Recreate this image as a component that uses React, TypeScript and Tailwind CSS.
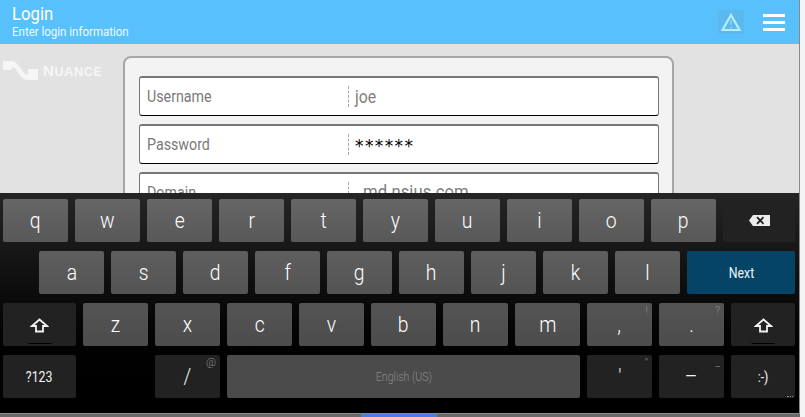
const font = { fontFamily: '"Roboto", "Noto Sans", sans-serif' }

type KeyDef = {
  label?: string
  hint?: string
  w?: string
  kind?: 'light' | 'dark' | 'next' | 'space' | 'gap'
  icon?: 'shift' | 'back'
  small?: boolean
}

const row1: KeyDef[] = [
  ...['q', 'w', 'e', 'r', 't', 'y', 'u', 'i', 'o', 'p'].map(label => ({ label })),
  { icon: 'back', kind: 'dark', w: 'w-[72px]' }
]
const row2: KeyDef[] = [
  ...['a', 's', 'd', 'f', 'g', 'h', 'j', 'k', 'l'].map(label => ({ label })),
  { label: 'Next', kind: 'next', w: 'w-[108px]', small: true }
]
const row3: KeyDef[] = [
  { icon: 'shift', kind: 'dark', w: 'w-[73px]' },
  ...['z', 'x', 'c', 'v', 'b', 'n', 'm'].map(label => ({ label })),
  { label: ',', hint: '!' },
  { label: '.', hint: '?' },
  { icon: 'shift', kind: 'dark', w: 'w-[64px]' }
]
const row4: KeyDef[] = [
  { label: '?123', kind: 'dark', w: 'w-[73px]', small: true },
  { kind: 'gap', w: 'w-[65px]' },
  { label: '/', hint: '@', kind: 'dark' },
  { label: 'English (US)', kind: 'space', w: 'w-[353px]' },
  { label: "'", hint: '"', kind: 'dark' },
  { label: '–', hint: '_', kind: 'dark' },
  { label: ':-)', kind: 'dark', w: 'w-[64px]', small: true }
]

function ShiftIcon() {
  return (
    <>
      <svg width="19" height="15" viewBox="0 0 19 15" className="mt-[1px]">
        <path d="M9.5 1.5 L17 8 H13 V13.5 H6 V8 H2 Z" fill="none" stroke="#f2f2f2" strokeWidth="1.8" />
      </svg>
      <div className="absolute bottom-[2px] left-1/2 h-[1px] w-[23px] -translate-x-1/2 bg-black" />
    </>
  )
}

function BackIcon() {
  return (
    <svg width="21" height="11" viewBox="0 0 21 11">
      <path d="M4 0 H21 V11 H4 L0 5.5 Z" fill="#ececec" />
      <path d="M8 2.2 L14.5 8.8 M14.5 2.2 L8 8.8" stroke="#222" strokeWidth="1.8" />
    </svg>
  )
}

function Key({ def, light }: { def: KeyDef; light: string }) {
  const kind = def.kind ?? 'light'
  if (kind === 'gap') return <div className={def.w} />

  const skin =
    kind === 'next'
      ? 'bg-[#054467] text-[#eef4f8]'
      : kind === 'dark'
        ? 'bg-[#222222] text-[#f4f4f4]'
        : kind === 'space'
          ? 'bg-[#4b4b4b] text-[#8a8a8a]'
          : `${light} text-white`

  const text =
    kind === 'space'
      ? 'text-[12px] font-light'
      : def.small
        ? 'text-[14px] font-normal'
        : 'text-[22px] font-light'

  return (
    <div className={`relative flex h-[43px] shrink-0 items-center justify-center rounded-[2px] ${def.w ?? 'w-[65px]'} ${skin} ${text}`}>
      {def.icon === 'shift' && <ShiftIcon />}
      {def.icon === 'back' && <BackIcon />}
      {def.label && <span className="inline-block scale-x-[0.88] leading-none">{def.label}</span>}
      {def.hint && (
        <span className="absolute top-[1px] right-[4px] text-[11px] leading-[14px] text-[#8c8c8c]">{def.hint}</span>
      )}
      {def.label === ':-)' && (
        <span className="absolute right-[2px] bottom-[1px] h-[1px] w-[6px] border-t border-dotted border-[#8c8c8c]" />
      )}
    </div>
  )
}

function KeyRow({ keys, light, className = '' }: { keys: KeyDef[]; light: string; className?: string }) {
  return (
    <div className={`flex gap-[7px] ${className}`}>
      {keys.map((k, i) => (
        <Key key={i} def={k} light={light} />
      ))}
    </div>
  )
}

function Field({ label, value, mono, indent }: { label: string; value: string; mono?: boolean; indent?: boolean }) {
  return (
    <div className="flex h-10 items-center rounded-[3px] border border-t-2 border-[#777] border-b-black bg-white pl-[7px]">
      <div className="w-[201px] text-[16px] text-[#7a7a7a]">
        <span className="inline-block origin-left scale-x-[0.89]">{label}</span>
      </div>
      <div className="h-[21px] border-l border-dashed border-[#aaa]" />
      {mono ? (
        <div className="pt-[5px] pl-[6px] text-[17px] tracking-[1.4px] text-black" style={{ fontFamily: '"DejaVu Sans", sans-serif' }}>
          {value}
        </div>
      ) : (
        <div className={`${indent ? 'pl-[14px] text-[19px]' : 'pl-[6px] text-[18px]'} text-[#808080]`}>
          <span className="inline-block origin-left scale-x-[0.88]">{value}</span>
        </div>
      )}
    </div>
  )
}

export default function App() {
  return (
    <div className="relative h-[417px] w-[805px] overflow-hidden bg-[#f4f4f4]" style={font}>
      <div className="h-[413px] w-[800px] border-r border-[#8a8a8a] bg-[#e2e2e2]">
        {/* top bar */}
        <div className="flex h-11 items-center justify-between bg-[#58c1fc] pr-[14px] pl-3 text-white">
          <div>
            <div className="origin-left scale-x-[0.88] text-[19px] leading-[18px]">Login</div>
            <div className="mt-[2px] origin-left scale-x-[0.92] text-[12.5px] leading-[14px] text-[#eefaff]">Enter login information</div>
          </div>
          <div className="flex items-center gap-[19px]">
            <div className="flex h-6 w-[26px] items-center justify-center bg-[#5cb9ee]">
              <svg width="22" height="20" viewBox="0 0 22 20">
                <path d="M11 3 L19.5 18 H2.5 Z" fill="none" stroke="#b5eeff" strokeWidth="2.2" />
                <path d="M11 8 V13 M11 14.5 V16.5" stroke="#8fc9e6" strokeWidth="2" />
              </svg>
            </div>
            <div className="flex w-[22px] flex-col gap-[4px]">
              <div className="h-[3px] bg-white" />
              <div className="h-[3px] bg-white" />
              <div className="h-[3px] bg-white" />
            </div>
          </div>
        </div>

        <div className="flex pt-3">
          {/* logo */}
          <div className="flex h-[26px] w-[123px] shrink-0 items-start pt-[4px] pl-[3px]">
            <svg width="38" height="21" viewBox="0 0 38 21" className="shrink-0">
              <path d="M0 1 H8 C12 1 14 3 16 6 L19 10 C21 13 23 15 25 15 V9 H35 V20 H25 C21 20 18 17 16 14 L12 8 C11 7 10 7 9 7 V10 H0 Z" fill="#f6f6f6" />
            </svg>
            <span className="ml-[2px] pt-[4px] text-[12.5px] leading-[14px] font-bold tracking-[0.7px] text-[#f6f6f6]" style={{ fontFamily: '"Liberation Sans", sans-serif' }}>
              <span className="text-[15px]">N</span>UANCE
            </span>
          </div>

          {/* form card */}
          <div className="h-[200px] w-[551px] rounded-t-lg border-2 border-[#a6a6a6] bg-[#f3f3f3] pt-[18px] pr-[13px] pl-[14px]">
            <div className="flex flex-col gap-2">
              <Field label="Username" value="joe" />
              <Field label="Password" value="******" mono />
              <Field label="Domain" value="md.nsius.com" indent />
            </div>
          </div>
        </div>
      </div>

      {/* on-screen keyboard, sits over the form */}
      <div className="absolute top-[193px] left-0 h-[220px] w-[799px] bg-gradient-to-b from-[#252525] via-[#0a0a0a] to-black pt-[6px] pl-[3px]">
        <div className="flex flex-col gap-[9px]">
          <KeyRow keys={row1} light="bg-gradient-to-b from-[#666666] to-[#585858]" />
          <KeyRow keys={row2} light="bg-gradient-to-b from-[#5e5e5e] to-[#545454]" className="pl-[36px]" />
          <KeyRow keys={row3} light="bg-gradient-to-b from-[#545454] to-[#4c4c4c]" />
          <KeyRow keys={row4} light="bg-[#4b4b4b]" />
        </div>
      </div>

      {/* bottom strip */}
      <div className="absolute top-[413px] left-0 h-1 w-[800px] border-t border-[#8a8a8a] bg-[#6a6a6a]">
        <div className="ml-[361px] h-[3px] w-[76px] bg-[#4a7fe0]" />
      </div>
    </div>
  )
}
